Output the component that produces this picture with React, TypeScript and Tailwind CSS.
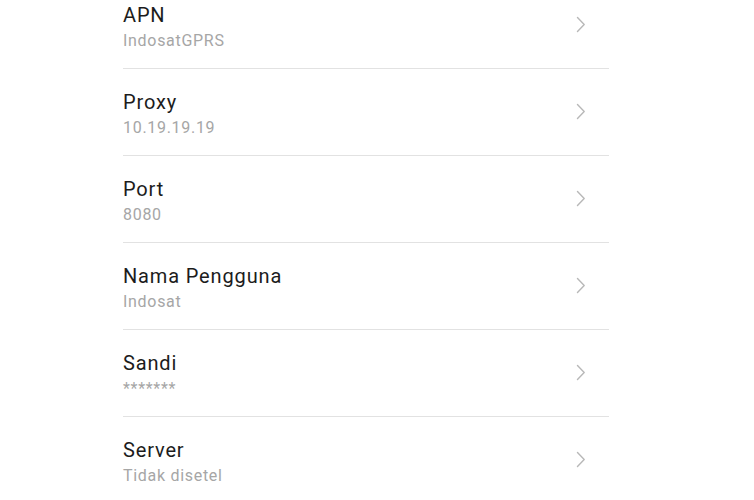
const rows = [
  { title: "APN", value: "IndosatGPRS" },
  { title: "Proxy", value: "10.19.19.19" },
  { title: "Port", value: "8080" },
  { title: "Nama Pengguna", value: "Indosat" },
  { title: "Sandi", value: "*******" },
  { title: "Server", value: "Tidak disetel" },
];

function Chevron() {
  return (
    <svg className="h-[17px] w-[10px] text-[#b8b8b8]" viewBox="0 0 10 17" fill="none" aria-hidden>
      <path d="M1.5 1.5L8.2 8.5L1.5 15.5" stroke="currentColor" strokeWidth="1.4" strokeLinecap="round" strokeLinejoin="round" />
    </svg>
  );
}

export default function App() {
  return (
    <div className="h-[500px] w-[754px] overflow-hidden bg-white font-['Roboto',sans-serif]">
      <div className="ml-[123px] mt-[-18px] w-[486px]">
        {rows.map((r, i) => (
          <div key={r.title} className={`flex items-center justify-between ${i > 0 ? "border-t border-[#e2e2e2]" : ""}`}>
            <div className="flex flex-col pb-[17px] pt-[21px]">
              <span className="text-[20px] leading-[24px] tracking-[0.85px] text-[#1c1c1c]">{r.title}</span>
              <span className="mt-[4px] text-[16px] leading-[20px] tracking-[0.7px] text-[#a6a6a6]">{r.value}</span>
            </div>
            <div className="mr-[23px] mb-[1px]">
              <Chevron />
            </div>
          </div>
        ))}
      </div>
    </div>
  );
}
